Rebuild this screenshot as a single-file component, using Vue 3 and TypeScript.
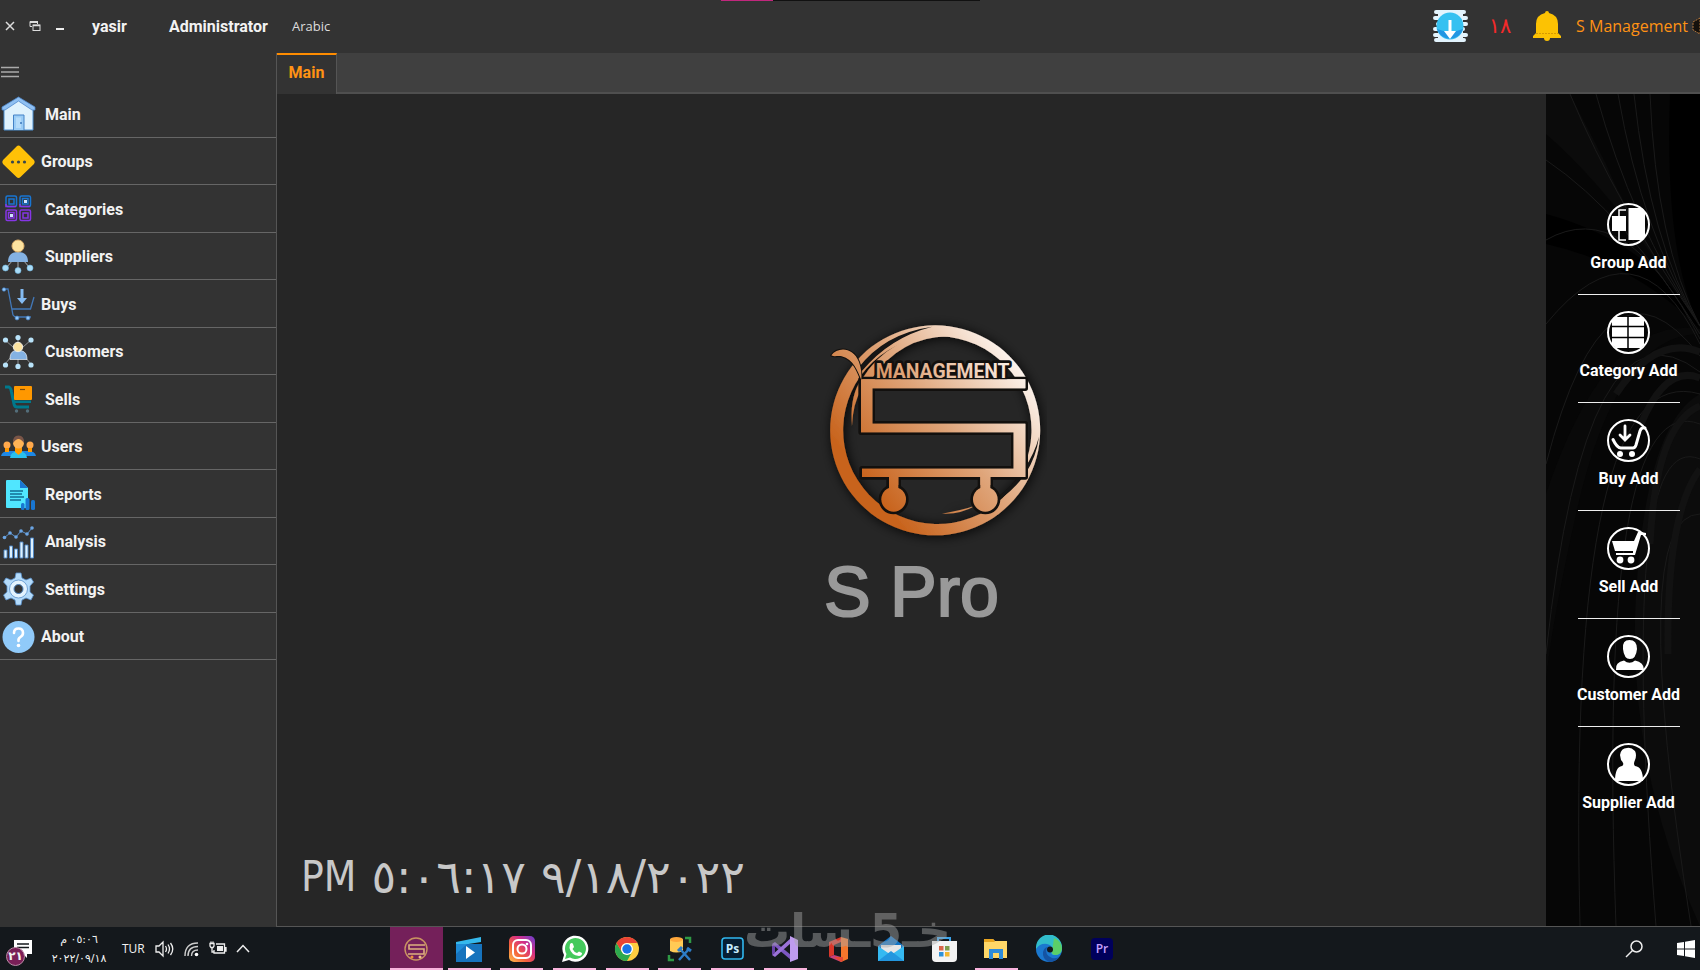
<script setup lang="ts">
import { ref } from 'vue'

interface MenuEntry {
  label: string
  tight?: boolean
  art: string
}

interface QuickAction {
  label: string
  art: string
}

interface TaskApp {
  name: string
  running: boolean
  active?: boolean
  art: string
}

const person = '<path d="M7 22C7 14 12 12 17 12S27 14 27 22Z" fill="#84b2e3"/><circle cx="17" cy="6" r="6" fill="#fde3a0" stroke="#e2b36e"/>'

const menu: MenuEntry[] = [
  {
    label: 'Main',
    art: '<path d="M2 11 16.500 2 31 11V33H2Z" fill="#dff2fd" stroke="#4c8fd0"/><path d="M0 10 16.500 0 33 10V13L30 13 16.500 4 3 13H0Z" fill="#8fc0f2" stroke="#4c86cc" stroke-width=".8"/><path d="M11.500 33V18H22V33" fill="#9bcdf6" stroke="#4483c7"/><path d="M14 20.500H19V31H14Z" fill="#b5dcfa"/><circle cx="19" cy="26" r="1" fill="#3d78bb"/>'
  },
  {
    label: 'Groups',
    tight: true,
    art: '<path d="M14.500 1.500Q16.500-.5 18.500 1.500L32 15Q33.500 17 32 19L18.500 32Q16.500 34 14.500 32L1 19Q-.5 17 1 15Z" fill="#ffc107"/><g fill="#37474f"><circle cx="10.500" cy="17" r="1.600"/><circle cx="16.500" cy="17" r="1.600"/><circle cx="22.500" cy="17" r="1.600"/></g>'
  },
  {
    label: 'Categories',
    art: '<g fill="none" stroke="#1976d2" stroke-width="1.500"><rect x="4" y="4" width="10.500" height="10.500" rx="1.500"/><rect x="7" y="7" width="5" height="5"/><rect x="18" y="4" width="10.500" height="10.500" rx="1.500"/><rect x="20.500" y="6.500" width="5.500" height="5.500"/></g><g fill="none" stroke="#8636e6" stroke-width="1.500"><path d="M4 12V14.500H14M18 12V14.500H28"/><rect x="4" y="18" width="10.500" height="10.500" rx="1.500"/><rect x="6.500" y="20.500" width="5.500" height="5.500"/><rect x="18" y="18" width="10.500" height="10.500" rx="1.500"/><rect x="21" y="21" width="5" height="5"/></g><path d="M22 8H25V11H22ZM8 22H11V25H8Z" fill="#cfe3ff"/>'
  },
  {
    label: 'Suppliers',
    art: '<g transform="translate(-1 0)"><path d="M5 28 12 20M17 30V20M29 28 22 20" stroke="#a9adb0"/>' + person + '<g fill="#a9dcf7" stroke="#70b6df" stroke-width=".6"><circle cx="4.500" cy="28" r="3"/><circle cx="17" cy="30.500" r="3"/><circle cx="29" cy="28" r="3"/></g></g>'
  },
  {
    label: 'Buys',
    tight: true,
    art: '<path d="M2 2H6L11 28Q12 30 15 30H29M10 22H28.500L32 10" fill="none" stroke="#4278b8" stroke-width="1.300"/><path d="M18.500 2H21.500V11H25L20 17 15 11H18.500Z" fill="#84bbf2"/><g fill="#8fc7fa" stroke="#4278b8" stroke-width=".7"><circle cx="2" cy="2.500" r="1.800"/><circle cx="15" cy="31" r="2"/><circle cx="26" cy="31" r="2"/></g>'
  },
  {
    label: 'Customers',
    art: '<g transform="translate(-1 0)"><path d="M4 5 12 12M30 5 22 12M17 3V8M4 29 10 22M30 29 24 22M17 31V24" stroke="#8d9194"/><path d="M9 24.500C9 17 12 15.500 17 15.500S26 17 26 24.500Z" fill="#84b2e3" stroke="#e8eef4" stroke-width=".7"/><circle cx="17" cy="12" r="4.700" fill="#fde3a0" stroke="#f4efe4"/><g fill="#b9e3fa"><circle cx="4.500" cy="5" r="2.600"/><circle cx="17" cy="2.600" r="2.600"/><circle cx="30" cy="5" r="2.600"/><circle cx="4.500" cy="30" r="2.600"/><circle cx="17" cy="31.400" r="2.600"/><circle cx="30" cy="30" r="2.600"/></g></g>'
  },
  {
    label: 'Sells',
    art: '<path d="M3 5H7Q9 6 9.500 10L12 22Q12.500 25 15 25H27" fill="none" stroke="#00798c" stroke-width="3"/><path d="M11 18.500H29V21H12Z" fill="#00798c"/><rect x="12" y="4" width="18" height="14" rx="1" fill="#ff9800"/><path d="M18 7.500H23" stroke="#7a4a0c" stroke-width="1.200"/><circle cx="14.500" cy="29" r="1.700" fill="#546e7a"/><circle cx="25.500" cy="29" r="1.700" fill="#546e7a"/>'
  },
  {
    label: 'Users',
    tight: true,
    art: '<path d="M-1 26Q0 21 7 21H26Q33 21 34 26Z" fill="#1e88e5"/><circle cx="5" cy="15" r="3.500" fill="#ffa94d"/><circle cx="28" cy="15" r="3.500" fill="#ffa94d"/><path d="M3 18H7V22H3ZM26 18H30V22H26Z" fill="#ff9800"/><path d="M8 28Q8 22 16.500 21 25 22 25 28Z" fill="#29c0ee"/><path d="M13 17H20V22L16.500 25 13 22Z" fill="#ff9800"/><circle cx="16.500" cy="13" r="5.500" fill="#ffb456"/><path d="M11 13Q10.500 5.500 16.500 5.500T22 13Q19 9 16.500 9T11 13Z" fill="#795548"/>'
  },
  {
    label: 'Reports',
    art: '<path d="M4 4Q4 3 5 3H18L26 11V30Q26 31 25 31H5Q4 31 4 30Z" fill="#50e6ff"/><path d="M18 3 26 11H18Z" fill="#1976d2"/><path d="M8 14H21M8 17H20M8 20H22M8 23H19" stroke="#126c93" stroke-width="1.300"/><g fill="#1976d2"><rect x="19" y="26" width="3.500" height="7" rx="1.500"/><rect x="23.500" y="21" width="4" height="12" rx="1.500"/><rect x="29" y="23" width="4" height="10" rx="1.500"/></g>'
  },
  {
    label: 'Analysis',
    art: '<path d="M2 13 8 8 14 12 19 6 25 9 30 3" fill="none" stroke="#5b91cb"/><g fill="#6ba5e4"><circle cx="2.500" cy="12.500" r="1.800"/><circle cx="8" cy="8" r="1.800"/><circle cx="14" cy="12" r="1.800"/><circle cx="19" cy="6" r="1.800"/><circle cx="25" cy="9" r="1.800"/><circle cx="30" cy="3" r="1.800"/></g><g fill="#dff2fd" stroke="#4c86c6" stroke-width=".9"><path d="M2 25H5V33H2ZM7.500 21H10.500V33H7.500ZM12.500 24H15.500V33H12.500ZM18 17H21V33H18ZM23 20H26V33H23ZM28.500 13H31.500V33H28.500Z"/></g>'
  },
  {
    label: 'Settings',
    art: '<g fill="#b4dbfa" stroke="#5b92cd" stroke-width=".8"><path d="M14 1H19L20 6 24 8 29 6 31.500 10 28 14V20L31.500 23 29 28 24 26 20 28 19 33H14L13 28 9 26 4 28 1.500 23 5 20V14L1.500 10 4 6 9 8 13 6Z"/><circle cx="16.500" cy="17" r="9" fill="#e3f3fe"/></g><circle cx="16.500" cy="17" r="4.500" fill="#333" stroke="#4a80bb"/>'
  },
  {
    label: 'About',
    tight: true,
    art: '<circle cx="16.500" cy="17" r="16" fill="#90caf9"/><path d="M12 13Q12 8.500 16.500 8.500T21 13Q21 15.500 18.500 17T16.500 21" fill="none" stroke="#fff" stroke-width="2.600" stroke-linecap="round"/><circle cx="16.500" cy="25.500" r="1.800" fill="#fff"/>'
  }
]

const ring = '<circle cx="21.500" cy="21.500" r="20.500" fill="none" stroke="#fff" stroke-width="2"/>'

const actions: QuickAction[] = [
  {
    label: 'Group Add',
    art: '<path d="M5 13H19V28H5ZM21.500 5H35L38 9V34L35 37H21.500Z" fill="#fff"/><path d="M12 13V7H19M12 28V37H19" fill="none" stroke="#fff" stroke-width="1.500"/>'
  },
  {
    label: 'Category Add',
    art: '<path d="M8 6H35L37 9V34L34 37H9L5 33V9Z" fill="#fff"/><path d="M21 5V38M4 15.500H39M4 26.500H39" stroke="#000" stroke-width="1.500"/>'
  },
  {
    label: 'Buy Add',
    art: '<path d="M6 20.500Q10 29 14 29H26Q28 29 29 26L33 12Q34.500 8 38 9" fill="none" stroke="#fff" stroke-width="3" stroke-linecap="round"/><path d="M18 7V20M13 16 18 21 23 16" fill="none" stroke="#fff" stroke-width="2.800" stroke-linecap="round"/><circle cx="13" cy="35" r="3" fill="#fff"/><circle cx="25" cy="35" r="3" fill="#fff"/>'
  },
  {
    label: 'Sell Add',
    art: '<path d="M5 14H27L31 5Q32 4 34 5L39 6V8L34 8 28 28H9V26H26V24H8Z" fill="#fff"/><circle cx="13" cy="33" r="3.400" fill="#fff"/><circle cx="24" cy="33" r="3.400" fill="#fff"/>'
  },
  {
    label: 'Customer Add',
    art: '<path d="M16 14Q15 5 22.500 5T30 14Q29 24 23 24T16 14ZM9 35Q8 27 17 25.500 22.500 30 28 25.500 37 27 37 35Z" fill="#fff"/>'
  },
  {
    label: 'Supplier Add',
    art: '<path d="M13 12Q14 5 20 5 24 4 28 8 30 12 28 17 26 21 28 23 36 24 36 38H8Q8 24 15 23 18 21 14 17Z" fill="#fff"/>'
  }
]

const apps: TaskApp[] = [
  {
    name: 'S Management',
    running: true,
    active: true,
    art: '<circle cx="14" cy="14" r="11" fill="none" stroke="#c99461" stroke-width="1.400"/><path d="M23 10H7V14H22V19H6" fill="none" stroke="#ddb07f" stroke-width="1.600"/><circle cx="10" cy="22" r="1.500" fill="#f0913d"/><circle cx="18" cy="22" r="1.500" fill="#f5c08c"/>'
  },
  {
    name: 'Movies',
    running: true,
    art: '<path d="M1 7 26 2V7L1 11Z" fill="#35b8ec"/><path d="M1 9H27V27H1Z" fill="#1673bd"/><path d="M1 9H12L1 19Z" fill="#1e8cd8"/><path d="M11 11 20 17.500 11 24Z" fill="#fff"/>'
  },
  {
    name: 'Instagram',
    running: true,
    art: '<defs><linearGradient id="insta" x1="0" y1="1" x2="1" y2="0"><stop offset="0" stop-color="#ffc14a"/><stop offset=".35" stop-color="#f3603c"/><stop offset=".65" stop-color="#d52f85"/><stop offset="1" stop-color="#6740d4"/></linearGradient></defs><rect x="1" y="1" width="26" height="26" rx="5" fill="url(#insta)"/><g fill="none" stroke="#fff" stroke-width="2"><rect x="5" y="5" width="18" height="18" rx="5"/><circle cx="14" cy="14" r="4.500"/></g><circle cx="19" cy="9" r="1.300" fill="#fff"/>'
  },
  {
    name: 'WhatsApp',
    running: true,
    art: '<path d="M1 27 3 20A13 13 0 1 1 8 25Z" fill="#fff"/><path d="M4 24 5.500 19A10.500 10.500 0 1 1 9 22.500Z" fill="#44c95c"/><path d="M9 9Q11 7 12 9L13 12 11.500 14Q13 17 16 18L18 16.500 21 18Q21 21 18 21 10 20 8.500 13Z" fill="#fff"/>'
  },
  {
    name: 'Chrome',
    running: true,
    art: '<circle cx="14" cy="14" r="12" fill="#ffcd40"/><path d="M14 26A12 12 0 0 1 3.600 8L9 17 14 20 19 17Z" fill="#2da94f"/><path d="M3.600 8A12 12 0 0 1 24.400 8H14A6 6 0 0 0 8.800 17Z" fill="#ea4335"/><circle cx="14" cy="14" r="6" fill="#fff"/><circle cx="14" cy="14" r="4.700" fill="#1a73e8"/>'
  },
  {
    name: 'Database tools',
    running: true,
    art: '<path d="M4 4H17V16Q10 19 4 16Z" fill="#ffca55"/><ellipse cx="10.500" cy="4.500" rx="6.500" ry="2.500" fill="#ffa83c"/><path d="M19 3H24V8M3 20V25H8" fill="none" stroke="#2f9a45" stroke-width="2.500"/><path d="M13 25 23 14M14 14 24 25" stroke="#2d7cc7" stroke-width="2.500"/><path d="M12 16 16 12M21 13 25 16" stroke="#2d7cc7" stroke-width="3"/>'
  },
  {
    name: 'Photoshop',
    running: true,
    art: '<rect x="3" y="3" width="21" height="21" rx="3" fill="#061e33" stroke="#30b7ee" stroke-width="1.600"/><text x="13.500" y="18" text-anchor="middle" font-family="Open Sans, sans-serif" font-size="12" font-weight="700" fill="#c6ecff">Ps</text>'
  },
  {
    name: 'Visual Studio',
    running: true,
    art: '<path d="M1 9 4 7 20 20V25Z" fill="#7e57c2"/><path d="M1 20 4 22 20 8V3Z" fill="#9b72d8"/><path d="M19 1 27 5V24L19 27Z" fill="#bf9bef"/><path d="M1 9 4 11V18L1 20Z" fill="#6a43a8"/>'
  },
  {
    name: 'Office',
    running: false,
    art: '<path d="M5 7 17 2V7L10 10V20L5 22Z" fill="#d8372a"/><path d="M17 2 24 4V24L17 27Z" fill="#f4762c"/><path d="M5 22 10 20 17 22V27Z" fill="#c83f7c"/><path d="M10 22H19V26L17 27Z" fill="#e24a34"/>'
  },
  {
    name: 'Mail',
    running: false,
    art: '<path d="M1 11 14 1 27 11V25H1Z" fill="#1274c4"/><path d="M4 10H24V18H4Z" fill="#e6e6e6"/><path d="M1 11 14 20 27 11V26H1Z" fill="#35b9f1"/><path d="M1 26 14 16 27 26Z" fill="#2296df"/>'
  },
  {
    name: 'Store',
    running: false,
    art: '<path d="M8 9V3H20V9" fill="none" stroke="#3aa3ea" stroke-width="2"/><path d="M2 6H27V23Q27 27 23 27H6Q2 27 2 23Z" fill="#f3f3f3"/><path d="M9 11H13.500V15.500H9Z" fill="#d9664a"/><path d="M15 11H19.500V15.500H15Z" fill="#7e9e4d"/><path d="M9 17H13.500V21.500H9Z" fill="#2e92d8"/><path d="M15 17H19.500V21.500H15Z" fill="#f3b72f"/>'
  },
  {
    name: 'File Explorer',
    running: true,
    art: '<path d="M2 4H11L13 6H25V23H2Z" fill="#ffd768"/><path d="M2 4H11L13 7H2Z" fill="#e9a520"/><path d="M7 14H21V24H17V18H11V24H7Z" fill="#2d8bdb"/>'
  },
  {
    name: 'Edge',
    running: false,
    art: '<circle cx="14" cy="14" r="13" fill="#1b78cf"/><path d="M1 12A13 13 0 0 1 27 13Q27 20 20 20 15 20 17 16 18 10 12 9 5 8 1 14Z" fill="#31bccb"/><path d="M19 3Q27 6 27 14 26 20 20 20 16 19 17 16Z" fill="#5bcf68"/><path d="M12 12Q9 20 17 23 22 24 25 21 21 27 14 27 7 24 8 17 9 13 12 12Z" fill="#1554a3"/><circle cx="15" cy="14.500" r="3" fill="#14181c"/>'
  },
  {
    name: 'Premiere',
    running: false,
    art: '<rect x="3" y="3" width="22" height="22" rx="4" fill="#00005b"/><text x="14" y="18" text-anchor="middle" font-family="Open Sans, sans-serif" font-size="12" font-weight="600" fill="#c6a0ff">Pr</text>'
  }
]

const current = ref('Main')
</script>

<template>
  <div class="screen">
    <header class="topbar">
      <div class="stripe"></div>
      <div class="window-buttons">
        <button type="button" aria-label="Close">
          <svg width="12" height="12" viewBox="0 0 12 12"><path d="M2 2 10 10M10 2 2 10" stroke="#ddd" stroke-width="1.500" /></svg>
        </button>
        <button type="button" aria-label="Restore">
          <svg width="12" height="12" viewBox="0 0 12 12" fill="none" stroke="#ddd"><path d="M3 6.500H1V1.500H8.500V4" /><path d="M1 2H9" stroke-width="2" /><rect x="4" y="5" width="7" height="5.500" /><path d="M4 5.500H11" stroke-width="1.500" /></svg>
        </button>
        <button type="button" aria-label="Minimize">
          <svg width="12" height="12" viewBox="0 0 12 12"><path d="M2 9H10" stroke="#eee" stroke-width="2" /></svg>
        </button>
      </div>
      <span class="user">yasir</span>
      <span class="role">Administrator</span>
      <a class="language" href="#arabic">Arabic</a>
      <div class="status">
        <button type="button" aria-label="Download" class="icon-button">
          <svg width="36" height="34" viewBox="0 0 36 34">
            <path d="M4 3H32M3 9H34M6 15H34M3 20H31M3 26H34M4 31H32" stroke="#e3f4fd" stroke-width="4" stroke-linecap="round" />
            <rect x="6" y="2" width="25" height="30" fill="#e3f4fd" />
            <circle cx="18" cy="17" r="13.500" fill="#35c1f1" />
            <path d="M5 20A13.500 13.500 0 0 0 31 20Q18 25 5 20Z" fill="#2196e3" />
            <path d="M16.500 11H19.500V22H24L18 30 12 22H16.500Z" fill="#fff" />
          </svg>
        </button>
        <span class="alerts">١٨</span>
        <button type="button" aria-label="Notifications" class="icon-button">
          <svg width="30" height="32" viewBox="0 0 30 32">
            <path d="M15 1Q17 1 17 3 26 5 26 14V23L29 26V28H1V26L4 23V14Q4 5 13 3 13 1 15 1Z" fill="#fcc203" />
            <path d="M12 28H18Q18 31 15 31T12 28Z" fill="#fcc203" />
            <path d="M4 23.500H26" stroke="#d79a00" stroke-dasharray="2 1" />
          </svg>
        </button>
        <span class="brand">S Management</span>
        <svg class="brand-mark" width="8" height="18" viewBox="0 0 8 18"><path d="M8 1 1 5V13L8 17Z" fill="#15110d" stroke="#b2763c" stroke-dasharray="2 1" /></svg>
      </div>
    </header>

    <div class="body">
      <aside class="sidebar">
        <button type="button" class="burger" aria-label="Toggle menu">
          <svg width="18" height="12" viewBox="0 0 18 12"><path d="M0 1.500H18M0 6H18M0 10.500H18" stroke="#aaa" stroke-width="1.500" /></svg>
        </button>
        <nav class="menu">
          <button
            v-for="entry in menu"
            :key="entry.label"
            type="button"
            class="entry"
            :class="{ tight: entry.tight }"
            @click="current = entry.label"
          >
            <svg width="34" height="34" viewBox="0 0 34 34" v-html="entry.art"></svg>
            <span>{{ entry.label }}</span>
          </button>
        </nav>
      </aside>

      <div class="workspace">
        <div class="tabs">
          <button type="button" class="tab">{{ current }}</button>
        </div>
        <div class="stage">
          <main class="canvas">
            <svg class="logo" width="270" height="256" viewBox="-70 0 810 768" role="img" aria-label="S Management">
              <defs>
                <linearGradient id="copper" gradientUnits="userSpaceOnUse" x1="190" y1="540" x2="650" y2="180">
                  <stop offset="0" stop-color="#c8631c" />
                  <stop offset=".5" stop-color="#dfa57a" />
                  <stop offset="1" stop-color="#fdf5ef" />
                </linearGradient>
                <filter id="glow" x="-20%" y="-20%" width="140%" height="140%">
                  <feDropShadow dx="4" dy="4" stdDeviation="18" flood-color="#000" flood-opacity=".9" />
                </filter>
              </defs>
              <g filter="url(#glow)">
                <path fill-rule="evenodd" d="M405 76A315 315 0 1 1 404 76ZM420 109A283 281 0 0 0 404 672A281 281 0 0 0 420 109Z" fill="url(#copper)" />
                <path d="M186 236Q262 112 440 84V109Q300 112 214 236Z" fill="url(#copper)" />
                <path d="M172 206Q252 100 396 80 268 112 184 214Z" fill="#161412" />
                <path d="M592 592Q690 510 716 410 700 530 590 604Z" fill="#161412" />
                <path d="M176 250Q148 300 155 378 158 310 182 270ZM425 641Q480 644 528 616 490 630 425 641Z" fill="url(#copper)" />
              </g>
              <g fill="url(#copper)" stroke="#12100e" stroke-width="16" stroke-linejoin="round" paint-order="stroke">
                <path d="M182 238H675V265H216V371H675V531H570V570H540V531H294V570H266V531H185V506H640V397H182Z" />
                <circle cx="280" cy="598" r="37" />
                <circle cx="555" cy="598" r="37" />
                <path d="M93 166C112 140 158 140 176 186 183 205 184 222 183 240 172 214 160 178 124 169 112 166 102 172 93 166Z" stroke-width="6" />
                <path d="M266 520H294V590H266ZM540 520H570V590H540Z" stroke="none" />
                <text x="427" y="235" text-anchor="middle" class="logo-text">MANAGEMENT</text>
              </g>
              <path d="M182 238H675V265H216V371H675V531H185V506H640V397H182Z" fill="url(#copper)" />
            </svg>
            <h1 class="product">S Pro</h1>
            <time class="clock"><span>PM</span><span class="digits">٥:٠٦:١٧</span><span class="digits">٩/١٨/٢٠٢٢</span></time>
          </main>

          <aside class="quick">
            <svg class="waves" viewBox="0 0 154 832" preserveAspectRatio="none" aria-hidden="true">
              <path d="M0 0H124Q118 160 154 232V832H0Z" fill="#060606" />
              <path d="M0 40Q70 100 154 232 80 120 60 70L24 0H0Z" fill="#0b0b0b" />
              <path d="M0 120Q110 150 154 235 90 170 0 150Z" fill="#000" />
              <path d="M154 300Q100 330 90 500T154 832Z" fill="#0c0c0c" />
              <path d="M154 240Q70 240 30 420T0 640V400Q60 220 154 235Z" fill="#090909" />
              <g fill="none" stroke="#1a1a1a">
                <path d="M24 0Q70 110 154 232M50 0Q86 130 154 232M72 0Q96 140 154 232M88 0Q104 150 154 232M104 0Q110 150 154 232" />
                <path d="M0 66Q80 120 154 240M0 146Q80 100 154 245M0 230Q90 120 154 250M0 370Q60 140 154 262M0 560Q40 190 154 278" />
                <path d="M34 832Q20 260 154 300M70 832Q50 290 154 330M110 832Q70 330 154 365M145 832Q80 420 154 420" />
              </g>
              <g fill="none" stroke="#121212" stroke-width="7">
                <path d="M154 258Q110 240 70 300M154 284Q120 270 95 330M154 312Q110 330 104 450M154 375Q120 420 122 560" />
              </g>
            </svg>
            <button v-for="action in actions" :key="action.label" type="button" class="action">
              <svg width="43" height="43" viewBox="0 0 43 43" v-html="ring + action.art"></svg>
              <span>{{ action.label }}</span>
            </button>
          </aside>
        </div>
      </div>
    </div>

    <footer class="taskbar">
      <div class="tray">
        <button type="button" class="notes" aria-label="Notification centre">
          <svg width="18" height="18" viewBox="0 0 18 18"><path d="M0 0H18V14H13V18L9 14H0Z" fill="#fff" /><path d="M3 4H15M3 7.500H15" stroke="#14181c" stroke-width="1.500" /></svg>
          <span class="badge">٢١</span>
        </button>
        <div class="date">
          <span dir="rtl">٠٥:٠٦ م</span>
          <span>٢٠٢٢/٠٩/١٨</span>
        </div>
        <span class="keyboard">TUR</span>
        <div class="tray-icons">
          <svg width="20" height="18" viewBox="0 0 20 18" fill="none" stroke="#eee" stroke-width="1.300"><path d="M1 6H4L8 2V16L4 12H1ZM10.500 6Q12.500 9 10.500 12M13 4.500Q16 9 13 13.500M15.500 3Q20 9 15.500 15" /></svg>
          <svg width="16" height="18" viewBox="0 0 16 18" fill="none" stroke="#ccc" stroke-width="1.400"><path d="M1 16Q1 3 14 3M4 16Q4 6.500 14 6.500M7.500 16Q7.500 10 14 10" /><circle cx="12.500" cy="14.500" r="1.800" fill="#fff" stroke="none" /></svg>
          <svg width="18" height="18" viewBox="0 0 18 18" fill="none" stroke="#eee" stroke-width="1.300"><path d="M7 4H15.500V13H5V10" /><path d="M8 6H14V11H8Z" fill="#eee" stroke="none" /><path d="M16 7V11H17V7M1 3.500H5V6L4 7.500H2L1 6ZM2 1.500V3.500M4 1.500V3.500M3 7.500V12H5" /></svg>
          <svg width="14" height="18" viewBox="0 0 14 18" fill="none" stroke="#eee" stroke-width="1.500"><path d="M1 12 7 5.500 13 12" /></svg>
        </div>
      </div>
      <div class="apps">
        <button
          v-for="app in apps"
          :key="app.name"
          type="button"
          class="app"
          :class="{ running: app.running, active: app.active }"
          :aria-label="app.name"
        >
          <svg width="28" height="28" viewBox="0 0 28 28" v-html="app.art"></svg>
        </button>
      </div>
      <div class="corner">
        <button type="button" class="icon-button" aria-label="Search">
          <svg width="18" height="20" viewBox="0 0 18 20" fill="none" stroke="#eee" stroke-width="1.500"><circle cx="11.500" cy="7.500" r="5.500" /><path d="M7.500 11.500 1 18" /></svg>
        </button>
        <button type="button" class="icon-button" aria-label="Start">
          <svg width="18" height="18" viewBox="0 0 18 18" fill="#fff"><path d="M0 3 7 2V8.500H0ZM8 1.800 18 0V8.500H8ZM0 9.500H7V16L0 15ZM8 9.500H18V18L8 16.200Z" /></svg>
        </button>
      </div>
    </footer>

    <div class="watermark" dir="rtl" aria-hidden="true">خـ5ـسات</div>
  </div>
</template>

<style>
html,
body {
  margin: 0;
  background: #262626;
}
</style>

<style scoped>
.screen {
  position: relative;
  display: flex;
  flex-direction: column;
  min-height: 100vh;
  overflow: hidden;
  background: #333;
  color: #f2f2f2;
  font-family: Roboto, "Liberation Sans", "DejaVu Sans", sans-serif;
  font-size: 16px;
}

button {
  margin: 0;
  padding: 0;
  border: 0;
  background: none;
  color: inherit;
  font: inherit;
  cursor: pointer;
}

svg {
  display: block;
  flex: none;
}

.topbar {
  position: relative;
  display: flex;
  align-items: center;
  height: 52px;
  padding: 0 0 1px 4px;
  white-space: nowrap;
}

.stripe {
  position: absolute;
  top: 0;
  left: 721px;
  width: 259px;
  height: 1px;
  background: linear-gradient(90deg, #c1277d 52px, #111 52px);
}

.window-buttons {
  display: flex;
  gap: 13px;
  width: 88px;
}

.user {
  width: 77px;
  font-weight: 700;
}

.role {
  width: 123px;
  font-weight: 700;
}

.language {
  color: #ddd;
  font-family: "Open Sans", "Noto Sans", sans-serif;
  font-size: 13px;
  text-decoration: none;
}

.status {
  display: flex;
  align-items: center;
  margin-left: auto;
}

.alerts {
  width: 64px;
  text-align: center;
  color: #f32a2a;
  font-family: "DejaVu Sans", sans-serif;
  font-size: 21px;
}

.brand {
  margin-left: 14px;
  color: #ff9214;
  font-family: "Open Sans", "Noto Sans", sans-serif;
  font-size: 16px;
}

.brand-mark {
  margin-left: 4px;
}

.body {
  display: flex;
  flex: 1;
}

.sidebar {
  box-sizing: border-box;
  width: 277px;
  flex: none;
  border-right: 1px solid #555;
}

.burger {
  display: block;
  height: 37px;
  padding: 0 1px;
}

.menu {
  display: flex;
  flex-direction: column;
}

.entry {
  box-sizing: border-box;
  display: flex;
  align-items: center;
  gap: 9px;
  height: 47px;
  padding: 1px 0 0 2px;
  border-bottom: 1px solid #666;
  font-weight: 700;
  text-align: left;
}

.entry:nth-child(odd) {
  height: 48px;
}

.entry.tight {
  gap: 5px;
}

.entry svg {
  overflow: visible;
}

.workspace {
  display: flex;
  flex: 1;
  flex-direction: column;
  min-width: 0;
}

.tabs {
  display: flex;
  height: 41px;
  background: linear-gradient(#404040 39px, #4f4f4f 39px);
}

.tab {
  width: 60px;
  padding-bottom: 4px;
  border-top: 2px solid #ff8c00;
  border-right: 1px solid #555;
  background: #333;
  color: #ff9214;
  font-weight: 700;
}

.stage {
  display: flex;
  flex: 1;
}

.canvas {
  display: flex;
  flex: 1;
  flex-direction: column;
  align-items: center;
  padding: 206px 0 21px;
  border-bottom: 1px solid #555;
  background: #262626;
}

.logo-text {
  font-family: Roboto, sans-serif;
  font-size: 58px;
  font-weight: 700;
}

.product {
  margin: 0;
  color: #999;
  font-family: "Liberation Sans", Arial, sans-serif;
  font-size: 70px;
  font-weight: 400;
  line-height: 72px;
  -webkit-text-stroke: 2px #999;
}

.clock {
  display: flex;
  align-self: flex-start;
  gap: 15px;
  margin-top: auto;
  padding-left: 24px;
  color: #c8c8c8;
  font-family: "DejaVu Sans Condensed", "DejaVu Sans", sans-serif;
  font-size: 42px;
  line-height: 56px;
}

.digits {
  direction: ltr;
  unicode-bidi: bidi-override;
  font-family: "DejaVu Sans", sans-serif;
  font-size: 46px;
}

.quick {
  position: relative;
  display: flex;
  flex: none;
  flex-direction: column;
  align-items: center;
  width: 143px;
  padding: 93px 0 0 11px;
  border-bottom: 1px solid #555;
  background: #000;
}

.waves {
  position: absolute;
  inset: 0;
  width: 100%;
  height: 100%;
}

.action {
  position: relative;
  box-sizing: border-box;
  display: flex;
  flex-direction: column;
  align-items: center;
  gap: 7px;
  width: 102px;
  height: 108px;
  padding-top: 16px;
  border-bottom: 1px solid #eee;
  color: #fff;
  font-weight: 700;
  line-height: 20px;
  white-space: nowrap;
}

.action:last-child {
  border-bottom-color: transparent;
}

.taskbar {
  display: flex;
  height: 43px;
  background: #14181c;
}

.tray {
  display: flex;
  align-items: center;
  width: 390px;
  flex: none;
}

.notes {
  position: relative;
  width: 48px;
  padding-left: 14px;
}

.badge {
  position: absolute;
  top: 7px;
  left: 6px;
  width: 17px;
  height: 17px;
  border: 1px solid #b98aa5;
  border-radius: 50%;
  background: #7a1f57;
  font-family: "DejaVu Sans", sans-serif;
  font-size: 12px;
  font-weight: 700;
  line-height: 17px;
  text-align: center;
}

.date {
  display: flex;
  flex-direction: column;
  width: 62px;
  font-family: "DejaVu Sans", sans-serif;
  font-size: 11px;
  line-height: 19px;
  text-align: center;
  white-space: nowrap;
}

.keyboard {
  width: 45px;
  padding-left: 12px;
  box-sizing: border-box;
  font-family: "Open Sans", "Noto Sans", sans-serif;
  font-size: 12px;
}

.tray-icons {
  display: flex;
  gap: 9px;
}

.apps {
  display: flex;
  width: 738px;
}

.app {
  display: flex;
  flex: 1;
  align-items: center;
  justify-content: center;
}

.running {
  background: linear-gradient(#f9b3dd, #f9b3dd) center bottom / 43px 2px no-repeat;
}

.active {
  background: linear-gradient(#74205a 41px, #f9b3dd 41px);
}

.corner {
  display: flex;
  align-items: center;
  gap: 34px;
  margin-left: auto;
  padding-right: 5px;
}

.watermark {
  position: absolute;
  right: 749px;
  bottom: 7px;
  color: #aaa;
  font-family: "DejaVu Sans", sans-serif;
  font-size: 46px;
  font-weight: 700;
  line-height: 64px;
  opacity: 0.45;
  pointer-events: none;
}
</style>
